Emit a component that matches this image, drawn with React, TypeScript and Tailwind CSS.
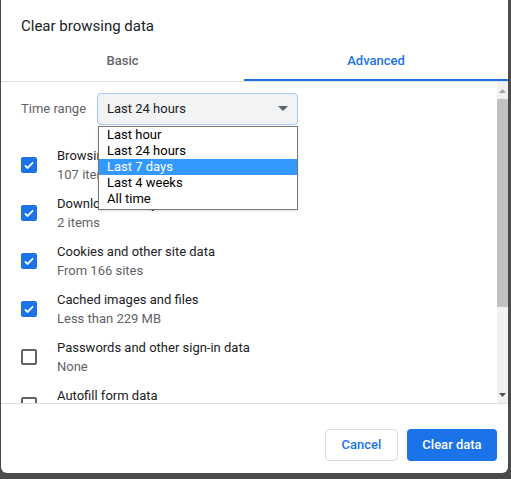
const items = [
  { title: "Browsing history", sub: "107 items", checked: true },
  { title: "Download history", sub: "2 items", checked: true },
  { title: "Cookies and other site data", sub: "From 166 sites", checked: true },
  { title: "Cached images and files", sub: "Less than 229 MB", checked: true },
  { title: "Passwords and other sign-in data", sub: "None", checked: false },
  { title: "Autofill form data", sub: "", checked: false },
];

const ranges = ["Last hour", "Last 24 hours", "Last 7 days", "Last 4 weeks", "All time"];

function Checkbox({ checked }: { checked: boolean }) {
  if (checked) {
    return (
      <div className="w-4 h-4 rounded-[2px] bg-[#1a73e8] flex items-center justify-center shrink-0">
        <svg width="14" height="14" viewBox="0 0 24 24" fill="none">
          <path d="M5 12.5l4.5 4.5L19 7.5" stroke="white" strokeWidth="3" />
        </svg>
      </div>
    );
  }
  return <div className="w-4 h-4 rounded-[2px] border-2 border-[#5f6368] shrink-0" />;
}

export default function App() {
  return (
    <div
      className="w-[511px] h-[479px] bg-[#4b4b4b] overflow-hidden"
      style={{ fontFamily: "Roboto, 'Liberation Sans', sans-serif" }}
    >
      <div className="ml-px w-[507px] h-[473px] bg-white rounded-b-md flex flex-col relative">
        <div className="pl-5 pt-[15px] h-[42px] text-[15px] text-[#202124]">Clear browsing data</div>

        {/* tabs */}
        <div className="flex h-[40px] border-b border-[#e0e0e0]">
          <div className="w-[243px] flex items-center justify-center text-[13px] font-medium text-[#5f6368] pb-[1px]">
            Basic
          </div>
          <div className="flex-1 flex items-center justify-center text-[13px] font-medium text-[#1a73e8] border-b-2 border-[#1a73e8]">
            Advanced
          </div>
        </div>

        {/* content */}
        <div className="flex h-[322px] border-b border-[#e0e0e0] relative">
          <div className="flex-1 overflow-hidden">
            <div className="flex items-center pl-5 pt-[11px]">
              <span className="text-[13px] text-[#5f6368] w-[76px]">Time range</span>
              <div className="w-[201px] h-[32px] rounded-[4px] border border-[#a8c7fa] bg-[#f1f3f4] flex items-center justify-between pl-[9px] pr-[9px] text-[13px] text-[#202124]">
                <span>Last 24 hours</span>
                <svg width="10" height="6" viewBox="0 0 10 6">
                  <path d="M0 0h10L5 5z" fill="#5f6368" />
                </svg>
              </div>
            </div>
            <div className="pt-4">
              {items.map((it) => (
                <div key={it.title} className="h-12 flex items-center pl-5">
                  <Checkbox checked={it.checked} />
                  <div className="ml-5 flex flex-col text-[13px] leading-[19px]">
                    <span className="text-[#202124]">{it.title}</span>
                    <span className="text-[#5f6368] h-[19px]">{it.sub}</span>
                  </div>
                </div>
              ))}
            </div>
          </div>

          {/* scrollbar */}
          <div className="w-[11px] bg-[#f1f1f1] flex flex-col items-center">
            <div className="h-[17px] flex items-center justify-center">
              <svg width="7" height="4" viewBox="0 0 7 4">
                <path d="M3.5 0L7 4H0z" fill="#a3a3a3" />
              </svg>
            </div>
            <div className="w-full h-[208px] bg-[#c1c1c1]" />
            <div className="flex-1" />
            <div className="h-[17px] flex items-center justify-center">
              <svg width="7" height="4" viewBox="0 0 7 4">
                <path d="M0 0h7L3.5 4z" fill="#505050" />
              </svg>
            </div>
          </div>

          {/* dropdown list */}
          <div className="absolute left-[97px] top-[44px] w-[200px] border border-[#767676] bg-white pb-[2px] shadow-sm">
            {ranges.map((r) => (
              <div
                key={r}
                className={
                  r === "Last 7 days"
                    ? "h-4 leading-4 pl-2 text-[13px] bg-[#3399ff] text-white"
                    : "h-4 leading-4 pl-2 text-[13px] text-black"
                }
              >
                {r}
              </div>
            ))}
          </div>
        </div>

        {/* footer */}
        <div className="flex justify-end gap-[9px] pr-[11px] pt-[25px]">
          <button className="w-[73px] h-[32px] rounded-[4px] border border-[#dadce0] bg-white text-[13px] font-medium text-[#1a73e8]">
            Cancel
          </button>
          <button className="w-[90px] h-[32px] rounded-[4px] bg-[#1a73e8] text-[13px] font-medium text-white">
            Clear data
          </button>
        </div>
      </div>
    </div>
  );
}
